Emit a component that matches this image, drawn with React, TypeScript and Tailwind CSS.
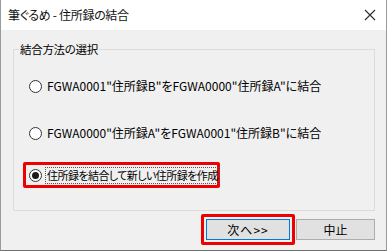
import React from "react";

const font = { fontFamily: '"Noto Sans CJK JP", "Noto Sans", sans-serif', fontFeatureSettings: '"palt"' } as React.CSSProperties;

function Radio({ checked }: { checked?: boolean }) {
  return (
    <span className="flex h-[13px] w-[13px] shrink-0 items-center justify-center rounded-full border border-[#333333] bg-white">
      {checked && <span className="h-[7px] w-[7px] rounded-full bg-[#1a1a1a]" />}
    </span>
  );
}

export default function App() {
  return (
    <div
      className="flex h-[251px] w-[387px] flex-col border-x border-b border-x-[#9a9a9a] border-b-[#6f6f6f] bg-[#f0f0f0] text-[12px] leading-[16px] text-black"
      style={font}
    >
      <div className="flex h-[30px] shrink-0 items-center justify-between bg-white pl-[7px] pr-[9px]">
        <span className="whitespace-nowrap text-[12px] tracking-[-0.3px] text-[#111]">筆ぐるめ - 住所録の結合</span>
        <svg width="12" height="12" viewBox="0 0 12 12" className="mr-[1px]">
          <path d="M1 1 L11 11 M11 1 L1 11" stroke="#2b2b2b" strokeWidth="1.1" fill="none" />
        </svg>
      </div>
      <div className="flex flex-1 flex-col pl-[12px] pr-[11px] pt-[19px]">
        <div className="relative h-[162px] w-[362px] border border-[#dcdcdc]">
          <span className="absolute left-[5px] top-[-9px] whitespace-nowrap bg-[#f0f0f0] px-[1px] text-[11.5px] tracking-[-0.3px] leading-[16px]">結合方法の選択</span>
          <div className="flex flex-col pl-[15px] pt-[27px]">
            <div className="flex h-[18px] items-center gap-[4px]">
              <Radio />
              <span className="whitespace-nowrap pl-[1px]">FGWA0001"住所録B"をFGWA0000"住所録A"に結合</span>
            </div>
            <div className="mt-[29px] flex h-[18px] items-center gap-[4px]">
              <Radio />
              <span className="whitespace-nowrap pl-[1px]">FGWA0000"住所録A"をFGWA0001"住所録B"に結合</span>
            </div>
            <div className="ml-[-6px] mt-[20px] flex h-[26px] w-[197px] items-center gap-[3px] rounded-[2px] border-[3px] border-[#ee0000] pl-[3px]">
              <Radio checked />
              <span className="whitespace-nowrap border border-dotted border-[#555] px-[1px] text-[11px] tracking-[-0.55px] leading-[15px]">住所録を結合して新しい住所録を作成</span>
            </div>
          </div>
        </div>
        <div className="mt-[3px] flex items-center justify-end">
          <div className="flex h-[31px] w-[94px] items-center justify-center rounded-[2px] border-[3px] border-[#ee0000]">
            <button className="flex h-[21px] w-[84px] items-center justify-center border border-[#0078d7] bg-[#e1e1e1] text-[12px] tracking-[1px]" style={font}>
              次へ&gt;&gt;
            </button>
          </div>
          <button className="ml-[1px] flex h-[21px] w-[79px] items-center justify-center border border-[#adadad] bg-[#e1e1e1] text-[12px]" style={font}>
            中止
          </button>
        </div>
      </div>
    </div>
  );
}
